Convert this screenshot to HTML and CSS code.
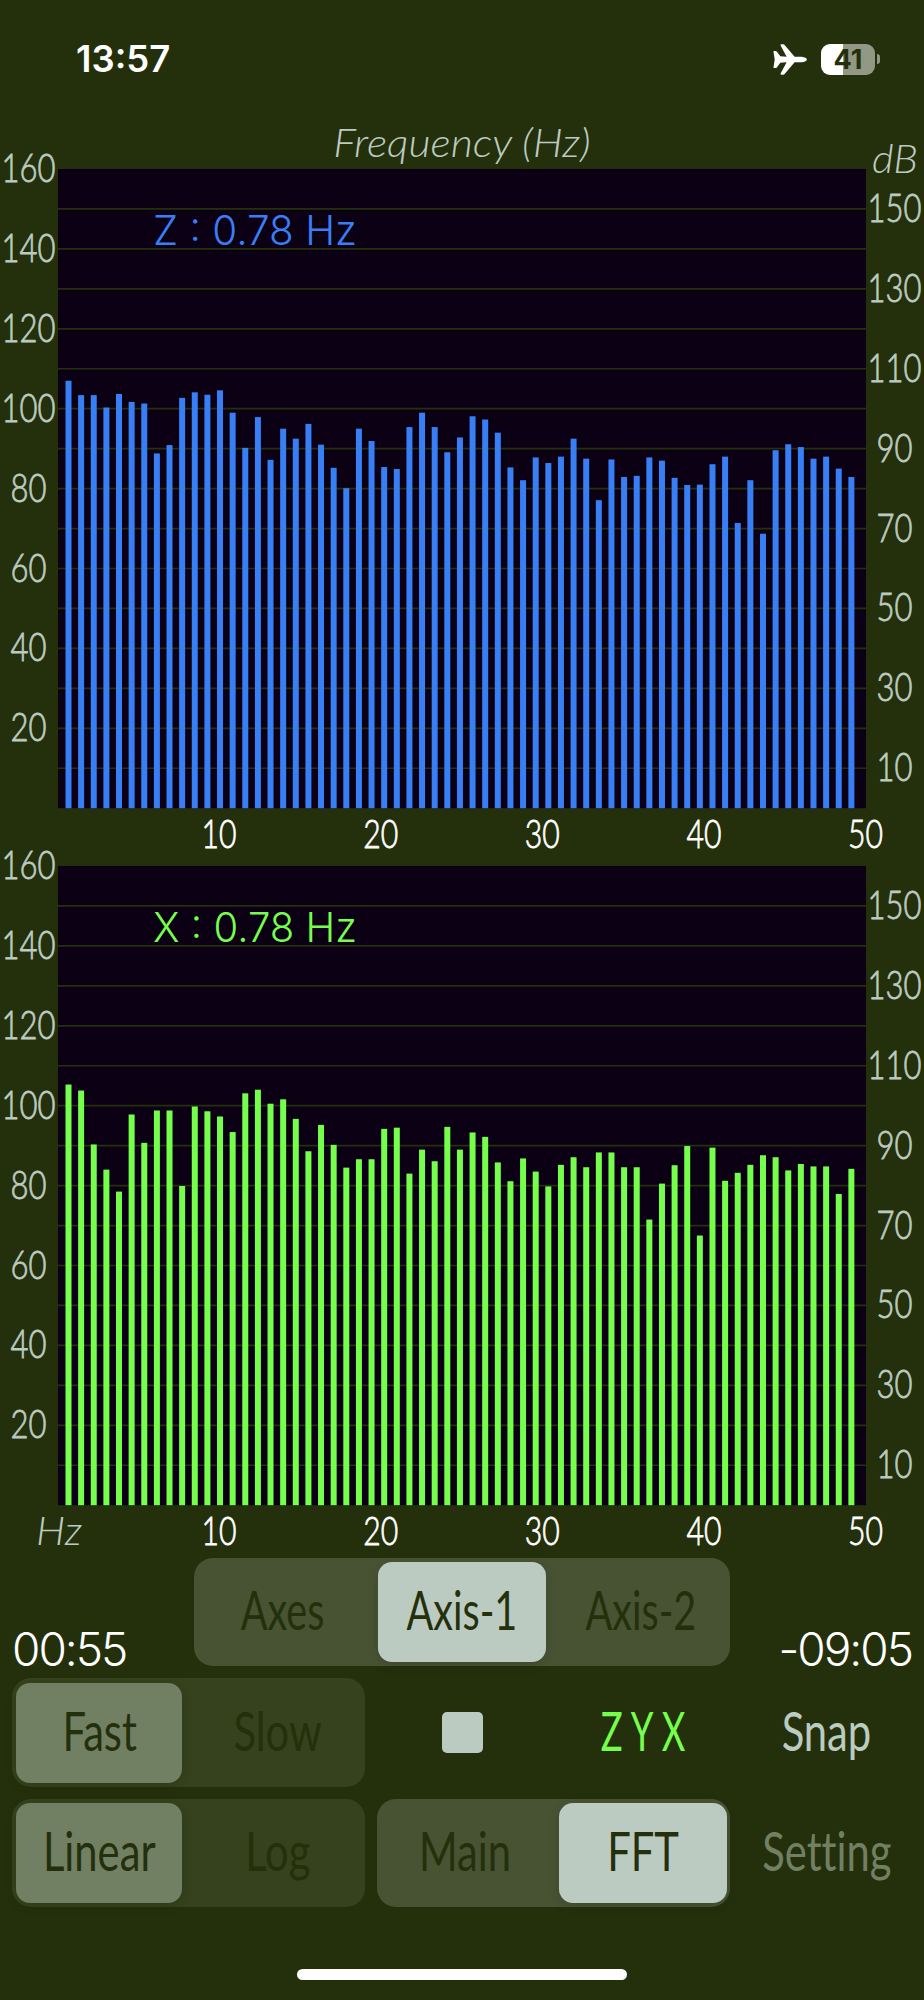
FILE: index.html
```html
<!DOCTYPE html>
<html lang="en">
<head>
  <meta charset="UTF-8">
  <meta name="viewport" content="width=device-width, initial-scale=1.0">
  <title>Vibration FFT</title>
  <link rel="stylesheet" href="styles.css">
</head>
<body>
  <header class="status-bar">
    <span class="clock">13:57</span>
    <div class="status-icons">
      <svg class="plane" viewBox="0 0 34 31" width="34" height="31">
        <path d="M0.5 7.8 Q0 7 1 7 H2.6 Q3.3 7 3.8 7.6 L7.3 12.2 L13.6 12.7 L7.6 1.4 Q7.2 0.3 8.3 0.3 H10.2 Q11 0.3 11.6 1 L21.6 12.7 H28.5 Q33.8 13.3 33.8 15.5 Q33.8 17.7 28.5 18.3 H21.6 L11.6 30 Q11 30.7 10.2 30.7 H8.3 Q7.2 30.7 7.6 29.6 L13.6 18.3 L7.3 18.8 L3.8 23.4 Q3.3 24 2.6 24 H1 Q0 24 0.5 23.2 L1.7 15.5 Z" fill="#fff"/>
      </svg>
      <div class="battery"><span>41</span></div>
      <div class="battery-tip"></div>
    </div>
  </header>

  <h1 class="title"><span>Frequency (Hz)</span></h1>

  <svg id="chart-z" class="chart" viewBox="0 0 924 697"></svg>
  <svg id="chart-x" class="chart" viewBox="0 0 924 697"></svg>

  <div class="controls">
    <div class="row row-top">
      <span class="time">00:55</span>
      <div class="segment three">
        <button><span>Axes</span></button>
        <button class="on"><span>Axis-1</span></button>
        <button><span>Axis-2</span></button>
      </div>
      <span class="time right">-09:05</span>
    </div>
    <div class="row">
      <div class="segment disabled">
        <button class="on"><span>Fast</span></button>
        <button><span>Slow</span></button>
      </div>
      <div class="middle">
        <div class="stop"></div>
        <div class="axes"><span>ZYX</span></div>
      </div>
      <button class="link"><span>Snap</span></button>
    </div>
    <div class="row">
      <div class="segment disabled">
        <button class="on"><span>Linear</span></button>
        <button><span>Log</span></button>
      </div>
      <div class="segment mode">
        <button><span>Main</span></button>
        <button class="on"><span>FFT</span></button>
      </div>
      <button class="link dim"><span>Setting</span></button>
    </div>
  </div>

  <div class="home-bar"></div>

  <script src="chart.js"></script>
</body>
</html>
```
FILE: styles.css
```css
* {
  box-sizing: border-box;
}

body {
  margin: 0;
  width: 924px;
  height: 2000px;
  display: flex;
  flex-direction: column;
  background-color: #24300b;
  color: #fff;
  font-family: Lato, "Open Sans", sans-serif;
  overflow: hidden;
}

.status-bar {
  display: flex;
  justify-content: space-between;
  align-items: center;
  height: 118px;
  padding: 0 44px 0 76px;
}

.clock {
  font: 600 36.5px Inter, sans-serif;
}

.status-icons {
  display: flex;
  align-items: center;
}

.plane {
  margin-right: 14px;
}

.battery {
  width: 54px;
  height: 31px;
  border-radius: 9px;
  background: linear-gradient(to right, #fff 41%, #929884 41%);
  color: #24300b;
  font: 700 27px/31px Inter, sans-serif;
  text-align: center;
}

.battery-tip {
  width: 3px;
  height: 10px;
  margin-left: 2px;
  border-radius: 0 3px 3px 0;
  background-color: #929884;
}

.title {
  height: 31px;
  margin: 0;
  text-align: center;
  font-size: 39px;
  line-height: 48px;
  font-weight: 300;
  font-style: italic;
  color: #bccbc1;
}

.title span {
  display: inline-block;
  transform: scaleX(1.1);
}

.chart {
  display: block;
  flex: none;
  width: 924px;
  height: 697px;
  overflow: visible;
}

.plot {
  fill: #0b0014;
}

.grid {
  stroke: #24300b;
  stroke-width: 1.7;
}

.tick,
.unit {
  font-size: 39px;
  font-weight: 300;
  fill: #bccbc1;
  stroke: #bccbc1;
  stroke-width: 0.8;
}

.tick {
  text-anchor: middle;
}

.tick.x {
  fill: #fff;
  stroke: #fff;
}

.unit {
  font-style: italic;
  stroke: none;
}

.readout {
  font: 300 41.5px Inter, sans-serif;
}

.controls {
  display: flex;
  flex-direction: column;
  gap: 11.7px;
  padding: 14.7px 12px 0;
}

.row {
  display: flex;
  gap: 11.7px;
  height: 108.8px;
}

.row-top {
  gap: 0;
  justify-content: space-between;
}

.time {
  width: 182px;
  align-self: flex-end;
  font: 300 46px/34px Inter, sans-serif;
  letter-spacing: -2px;
}

.time.right {
  text-align: right;
}

.segment {
  display: flex;
  justify-content: space-between;
  width: 353px;
  padding: 4.4px;
  border-radius: 19px;
  background-color: #475333;
}

.segment.three {
  width: 535.5px;
}

.segment.mode {
  padding-right: 2.5px;
}

button {
  border: none;
  padding: 0;
  background: none;
  color: #24300b;
  font-family: inherit;
  font-size: 53.5px;
  font-weight: 400;
  font-variant-ligatures: none;
}

.segment button {
  width: 168.4px;
  border-radius: 14px;
}

.segment .on {
  background-color: #bccbc1;
  box-shadow: 0 3px 12px rgba(0, 0, 0, 0.12);
}

.segment.disabled {
  background-color: #35421d;
}

.segment.disabled button {
  width: 165.8px;
}

.segment.disabled .on {
  background-color: #717f63;
}

button span,
.axes span {
  display: inline-block;
  transform: translateY(-3px) scaleX(0.78);
}

.three button span {
  transform: translateY(-3px) scaleX(0.74);
}

.middle {
  display: flex;
  align-items: center;
  width: 353px;
}

.stop {
  width: 41px;
  height: 41px;
  margin-left: 65px;
  border-radius: 5px;
  background-color: #bccbc1;
}

.axes {
  flex: 1;
  padding-left: 82px;
  text-align: center;
  color: #75ff4c;
  font-size: 53.5px;
  letter-spacing: 12px;
}

.axes span {
  transform: translateY(-3px) scaleX(0.68);
}

.link {
  flex: 1;
  color: #bccbc1;
}

.link.dim {
  color: #717f63;
}

.home-bar {
  width: 330px;
  height: 11px;
  margin: 62px auto 0;
  border-radius: 6px;
  background-color: #fff;
}
```
FILE: chart.js
```js
const LEFT = 58;
const TOP = 20;
const WIDTH = 808;
const HEIGHT = 639.2;
const MAX_DB = 160;
const STEP = 12.627;

const zLevels = [
  107.0, 103.4, 103.4, 100.3, 103.7, 101.7, 101.3, 88.8, 90.9, 102.7, 104.1, 103.5, 104.6, 99.0, 90.2, 97.9,
  87.2, 95.0, 92.5, 96.2, 91.0, 85.2, 80.1, 95.0, 91.9, 85.4, 84.9, 95.4, 99.0, 95.4, 89.1, 92.8,
  98.1, 97.3, 94.0, 85.3, 82.1, 87.8, 86.4, 88.0, 92.5, 87.5, 77.1, 87.3, 82.9, 83.2, 87.8, 87.0,
  82.7, 80.9, 81.0, 86.1, 88.0, 71.4, 82.1, 68.7, 89.6, 91.1, 90.4, 87.5, 88.0, 85.0, 82.9
];

const xLevels = [
  105.3, 103.8, 90.3, 84.0, 78.5, 97.8, 90.7, 98.8, 98.8, 79.9, 99.8, 98.6, 97.3, 93.4, 103.1, 104.0,
  100.5, 101.6, 96.7, 88.6, 95.2, 90.2, 84.5, 86.6, 86.6, 94.2, 94.5, 83.0, 89.0, 86.1, 94.7, 89.0,
  93.3, 92.2, 85.8, 81.1, 86.8, 83.5, 79.8, 85.2, 87.1, 84.6, 88.3, 88.3, 84.6, 84.6, 71.5, 80.5,
  85.1, 89.9, 67.5, 89.5, 81.2, 83.2, 85.2, 87.6, 87.1, 83.8, 85.4, 84.8, 84.8, 77.9, 84.2
];

const yOf = db => TOP + HEIGHT * (1 - db / MAX_DB);

function label(cls, x, y, value, width) {
  return `<text class="${cls}" x="${x}" y="${y}" textLength="${width}" lengthAdjust="spacingAndGlyphs">${value}</text>`;
}

function drawChart(id, levels, color, readout, units) {
  let out = `<rect class="plot" x="${LEFT}" y="${TOP}" width="${WIDTH}" height="${HEIGHT}"/>`;

  for (let db = 10; db < MAX_DB; db += 10) {
    out += `<line class="grid" x1="${LEFT}" x2="${LEFT + WIDTH}" y1="${yOf(db)}" y2="${yOf(db)}"/>`;
  }

  levels.forEach((db, i) => {
    out += `<rect x="${65.5 + i * STEP}" y="${yOf(db)}" width="6" height="${HEIGHT * db / MAX_DB}" fill="${color}"/>`;
  });

  // even tens on the left, odd tens on the right
  for (let db = 20; db <= MAX_DB; db += 20) {
    out += label('tick', 28.5, yOf(db) + 13, db, db > 99 ? 54 : 36);
    out += label('tick', 894.5, yOf(db - 10) + 13, db - 10, db > 109 ? 54 : 36);
  }

  for (let hz = 10; hz <= 50; hz += 10) {
    out += label('tick x', LEFT + WIDTH * hz / 50 - 0.5, TOP + HEIGHT + 40, hz, 35);
  }

  out += `<g fill="${color}">${label('readout', 153, 96, readout, 204)}</g>`;
  out += units;
  document.getElementById(id).innerHTML = out;
}

drawChart('chart-z', zLevels, '#387ff6', 'Z : 0.78 Hz', label('unit', 872, 24, 'dB', 46));
drawChart('chart-x', xLevels, '#75ff4c', 'X : 0.78 Hz', label('unit', 36, 699, 'Hz', 46));
```
